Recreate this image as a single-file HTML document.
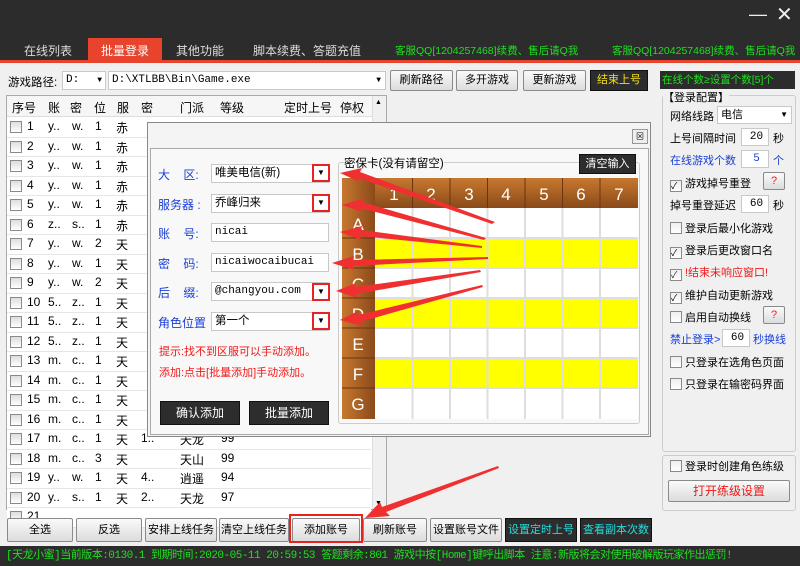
<!DOCTYPE html>
<html><head><meta charset="utf-8"><style>
*{margin:0;padding:0;box-sizing:border-box}
body{width:800px;height:566px;overflow:hidden;background:#f0f0f0;font-family:"Liberation Sans","Noto Sans CJK SC",sans-serif;font-size:12px;color:#000;position:relative}
.a{position:absolute}
.btn{position:absolute;background:linear-gradient(#fafafa,#dcdcdc);border:1px solid #8a8a8a;border-radius:2px;text-align:center;font-size:11px;line-height:22px;white-space:nowrap;overflow:hidden}
.dk{background:#2d2d2d;border:1px solid #111;border-radius:0}
.in{position:absolute;background:#fff;border:1px solid #c8c8c8;font-family:"Liberation Mono","Noto Sans CJK SC",monospace;font-size:11px;padding-left:3px}
.cb{display:inline-block;width:12px;height:12px;border:1px solid #8a8a8a;background:linear-gradient(#eee,#fff);vertical-align:-2px;margin-right:3px}
.row{position:absolute;left:7px;width:364px;height:19.5px;border-bottom:1px solid #e6e6e6;background:#fff}
.row span{position:absolute;top:1px;font-size:12px}
.lbl{position:absolute;color:#1a3fd6;font-size:12px}
.dd{position:absolute;width:18px;height:18px;border:2px solid #e8231f;background:#fff;font-size:8px;text-align:center;line-height:14px}
.rp{position:absolute;left:670px;font-size:11px;white-space:nowrap}
</style></head><body>
<div class="a" style="left:0;top:0;width:800px;height:62px;background:#2c2c2c"></div>
<div class="a" style="left:0;top:60px;width:800px;height:3px;background:#e8432c"></div>
<div class="a" style="left:88px;top:38px;width:74px;height:24px;background:#e8432c"></div>
<div class="a" style="left:24px;top:42px;color:#ddd;font-size:12px">在线列表</div>
<div class="a" style="left:101px;top:42px;color:#fff;font-size:12px">批量登录</div>
<div class="a" style="left:176px;top:42px;color:#ddd;font-size:12px">其他功能</div>
<div class="a" style="left:253px;top:42px;color:#ddd;font-size:12px">脚本续费、答题充值</div>
<div class="a" style="left:395px;top:43px;color:#1ee01e;font-size:10.5px;white-space:nowrap">客服QQ[1204257468]续费、售后请Q我</div>
<div class="a" style="left:612px;top:43px;color:#1ee01e;font-size:10.5px;white-space:nowrap">客服QQ[1204257468]续费、售后请Q我</div>
<div class="a" style="left:749px;top:4px;color:#eee;font-size:18px">—</div>
<div class="a" style="left:776px;top:2px;color:#eee;font-size:20px">✕</div>
<div class="a" style="left:8px;top:74px;font-size:11.5px">游戏路径:</div>
<div class="in" style="left:62px;top:71px;width:44px;height:19px;line-height:17px">D:<span style="position:absolute;right:3px;font-size:8px">▼</span></div>
<div class="in" style="left:108px;top:71px;width:278px;height:19px;line-height:17px">D:\XTLBB\Bin\Game.exe<span style="position:absolute;right:4px;font-size:8px">▼</span></div>
<div class="btn" style="left:390px;top:70px;width:63px;height:21px;line-height:19px">刷新路径</div>
<div class="btn" style="left:456px;top:70px;width:62px;height:21px;line-height:19px">多开游戏</div>
<div class="btn" style="left:523px;top:70px;width:63px;height:21px;line-height:19px">更新游戏</div>
<div class="btn dk" style="left:590px;top:70px;width:58px;height:21px;line-height:19px;color:#f0e020">结束上号</div>
<div class="a" style="left:660px;top:71px;width:135px;height:18px;background:#2c2c2c;color:#1ee01e;font-size:10.5px;line-height:18px;padding-left:2px;white-space:nowrap">在线个数≥设置个数[5]个</div>
<div class="a" style="left:6px;top:95px;width:381px;height:415px;background:#fff;border:1px solid #aaa"></div>
<div class="a" style="left:7px;top:96px;width:365px;height:21px;background:#f6f6f6;border-bottom:1px solid #ddd"></div>
<div class="a" style="left:12px;top:99px">序号</div><div class="a" style="left:48px;top:99px">账</div><div class="a" style="left:70px;top:99px">密</div><div class="a" style="left:94px;top:99px">位</div><div class="a" style="left:117px;top:99px">服</div><div class="a" style="left:141px;top:99px">密</div><div class="a" style="left:180px;top:99px">门派</div><div class="a" style="left:220px;top:99px">等级</div><div class="a" style="left:284px;top:99px">定时上号</div><div class="a" style="left:340px;top:99px">停权</div>
<div class="a" style="left:372px;top:96px;width:14px;height:413px;background:#f0f0f0;border-left:1px solid #ddd"></div>
<div class="a" style="left:375px;top:99px;font-size:7px">▲</div><div class="a" style="left:375px;top:500px;font-size:7px">▼</div>
<div id="rows"></div>
<div class="a" style="left:662px;top:95px;width:134px;height:357px;border:1px solid #ccc;border-radius:3px"></div>
<div class="a" style="left:663px;top:89px;background:#f0f0f0;font-size:11px">【登录配置】</div>
<div class="rp" style="top:108px">网络线路</div><div class="in" style="left:717px;top:106px;width:75px;height:18px;font-family:'Liberation Sans','Noto Sans CJK SC';font-size:11px;line-height:16px">电信<span style="position:absolute;right:3px;font-size:8px">▼</span></div>
<div class="rp" style="top:130px">上号间隔时间</div><div class="in" style="left:741px;top:128px;width:28px;height:18px;text-align:center;line-height:16px">20</div><div class="a" style="left:773px;top:130px;font-size:11px">秒</div>
<div class="rp" style="top:152px;color:#1a3fd6">在线游戏个数</div><div class="in" style="left:741px;top:150px;width:28px;height:18px;text-align:center;color:#1a3fd6;line-height:16px">5</div><div class="a" style="left:773px;top:152px;color:#1a3fd6;font-size:11px">个</div>
<div class="rp" style="top:175px"><span class="cb" style="font-size:9px;line-height:10px">✓</span>游戏掉号重登</div><div class="btn" style="left:763px;top:172px;width:22px;height:18px;line-height:16px;color:#e22">?</div>
<div class="rp" style="top:197px">掉号重登延迟</div><div class="in" style="left:741px;top:195px;width:28px;height:18px;text-align:center;line-height:16px">60</div><div class="a" style="left:773px;top:197px;font-size:11px">秒</div>
<div class="rp" style="top:220px"><span class="cb"></span>登录后最小化游戏</div>
<div class="rp" style="top:242px"><span class="cb" style="font-size:9px;line-height:10px">✓</span>登录后更改窗口名</div>
<div class="rp" style="top:264px;color:#f01818"><span class="cb" style="font-size:9px;line-height:10px;color:#222">✓</span>!结束未响应窗口!</div>
<div class="rp" style="top:287px"><span class="cb" style="font-size:9px;line-height:10px">✓</span>维护自动更新游戏</div>
<div class="rp" style="top:309px"><span class="cb"></span>启用自动换线</div><div class="btn" style="left:763px;top:306px;width:22px;height:18px;line-height:16px;color:#e22">?</div>
<div class="rp" style="top:331px;color:#1a3fd6">禁止登录&gt;</div><div class="in" style="left:722px;top:329px;width:28px;height:18px;text-align:center;line-height:16px">60</div><div class="a" style="left:753px;top:331px;color:#1a3fd6;font-size:11px">秒换线</div>
<div class="rp" style="top:354px"><span class="cb"></span>只登录在选角色页面</div>
<div class="rp" style="top:376px"><span class="cb"></span>只登录在输密码界面</div>
<div class="a" style="left:662px;top:455px;width:134px;height:56px;border:1px solid #ccc;border-radius:3px"></div>
<div class="rp" style="top:458px"><span class="cb"></span>登录时创建角色练级</div>
<div class="btn" style="left:668px;top:480px;width:122px;height:22px;line-height:20px;color:#f01818;font-size:12px">打开练级设置</div>
<div class="btn" style="left:7px;top:518px;width:66px;height:24px">全选</div>
<div class="btn" style="left:76px;top:518px;width:66px;height:24px">反选</div>
<div class="btn" style="left:145px;top:518px;width:72px;height:24px">安排上线任务</div>
<div class="btn" style="left:219px;top:518px;width:70px;height:24px">清空上线任务</div>
<div class="btn" style="left:292px;top:518px;width:68px;height:24px">添加账号</div>
<div class="a" style="left:289px;top:514px;width:74px;height:29px;border:2px solid #e8231f"></div>
<div class="btn" style="left:363px;top:518px;width:64px;height:24px">刷新账号</div>
<div class="btn" style="left:430px;top:518px;width:72px;height:24px">设置账号文件</div>
<div class="btn dk" style="left:505px;top:518px;width:72px;height:24px;color:#20e0e0">设置定时上号</div>
<div class="btn dk" style="left:580px;top:518px;width:72px;height:24px;color:#20e0e0">查看副本次数</div>
<div class="a" style="left:0;top:546px;width:800px;height:20px;background:#2c2c2c;color:#1ee01e;font-size:11px;line-height:20px;padding-left:6px;white-space:nowrap;font-family:'Liberation Mono','Noto Sans CJK SC',monospace;letter-spacing:-0.5px">[天龙小蜜]当前版本:0130.1 到期时间:2020-05-11 20:59:53 答题剩余:801 游戏中按[Home]键呼出脚本 注意:新版将会对使用破解版玩家作出惩罚!</div>
<div class="a" style="left:147px;top:122px;width:504px;height:315px;background:#f4f4f4;border:1px solid #888"></div>
<div class="a" style="left:150px;top:148px;width:499px;height:287px;border:1px solid #aaa;background:#f8f8f8"></div>
<div class="a" style="left:632px;top:129px;width:16px;height:15px;border:1px solid #999;font-size:8px;text-align:center;line-height:13px;background:#eee">⊠</div>
<div class="lbl" style="left:158px;top:166px">大&nbsp;&nbsp;&nbsp;&nbsp;区:</div>
<div class="lbl" style="left:158px;top:196px">服务器 :</div>
<div class="lbl" style="left:158px;top:225px">账&nbsp;&nbsp;&nbsp;&nbsp;号:</div>
<div class="lbl" style="left:158px;top:255px">密&nbsp;&nbsp;&nbsp;&nbsp;码:</div>
<div class="lbl" style="left:158px;top:284px">后&nbsp;&nbsp;&nbsp;&nbsp;缀:</div>
<div class="lbl" style="left:158px;top:314px">角色位置</div>
<div class="in" style="left:211px;top:164px;width:118px;height:19px;font-family:'Liberation Sans','Noto Sans CJK SC';font-size:11.5px;line-height:17px">唯美电信(新)</div>
<div class="in" style="left:211px;top:194px;width:118px;height:19px;font-family:'Liberation Sans','Noto Sans CJK SC';font-size:11.5px;line-height:17px">乔峰归来</div>
<div class="in" style="left:211px;top:223px;width:118px;height:19px;line-height:17px">nicai</div>
<div class="in" style="left:211px;top:253px;width:118px;height:19px;line-height:17px">nicaiwocaibucai</div>
<div class="in" style="left:211px;top:282px;width:118px;height:19px;line-height:17px">@changyou.com</div>
<div class="in" style="left:211px;top:312px;width:118px;height:19px;font-family:'Liberation Sans','Noto Sans CJK SC';font-size:11.5px;line-height:17px">第一个</div>
<div class="dd" style="left:312px;top:164px">▼</div><div class="dd" style="left:312px;top:194px">▼</div><div class="dd" style="left:312px;top:283px">▼</div><div class="dd" style="left:312px;top:312px">▼</div>
<div class="a" style="left:159px;top:343px;color:#f01818;font-size:11px">提示:找不到区服可以手动添加。</div>
<div class="a" style="left:159px;top:364px;color:#f01818;font-size:11px">添加:点击[批量添加]手动添加。</div>
<div class="btn dk" style="left:160px;top:401px;width:80px;height:24px;color:#fff;font-size:12px">确认添加</div>
<div class="btn dk" style="left:249px;top:401px;width:80px;height:24px;color:#fff;font-size:12px">批量添加</div>
<div class="a" style="left:338px;top:162px;width:302px;height:262px;border:1px solid #ccc;border-radius:3px"></div>
<div class="a" style="left:344px;top:155px;background:#f8f8f8;font-size:11.5px">密保卡(没有请留空)</div>
<div class="btn dk" style="left:579px;top:154px;width:57px;height:20px;line-height:18px;color:#fff">清空输入</div>
<svg class="a" style="left:342px;top:178px" width="296" height="241">
<defs><linearGradient id="g" x1="0" y1="0" x2="0" y2="1"><stop offset="0" stop-color="#c7782f"/><stop offset="1" stop-color="#8a4a1a"/></linearGradient>
<linearGradient id="g2" x1="0" y1="0" x2="1" y2="0"><stop offset="0" stop-color="#c7782f"/><stop offset="1" stop-color="#8a4a1a"/></linearGradient></defs>
<rect x="0" y="0" width="296" height="30" fill="url(#g)"/>
<rect x="0" y="0" width="33" height="241" fill="url(#g2)"/>
<rect x="33" y="30" width="263" height="211" fill="#fff"/>
<g fill="#ffff00"><rect x="33" y="60" width="263" height="30"/><rect x="33" y="120" width="263" height="30"/><rect x="33" y="180" width="263" height="30"/></g>
<g stroke="#dedede" stroke-width="2">
<line x1="70.5" y1="30" x2="70.5" y2="241"/><line x1="108" y1="30" x2="108" y2="241"/><line x1="145.5" y1="30" x2="145.5" y2="241"/><line x1="183" y1="30" x2="183" y2="241"/><line x1="220.5" y1="30" x2="220.5" y2="241"/><line x1="258" y1="30" x2="258" y2="241"/>
<line x1="33" y1="60" x2="296" y2="60"/><line x1="33" y1="90" x2="296" y2="90"/><line x1="33" y1="120" x2="296" y2="120"/><line x1="33" y1="150" x2="296" y2="150"/><line x1="33" y1="180" x2="296" y2="180"/><line x1="33" y1="210" x2="296" y2="210"/></g>
<g stroke="#6a3510" stroke-width="1"><line x1="70.5" y1="0" x2="70.5" y2="30"/><line x1="108" y1="0" x2="108" y2="30"/><line x1="145.5" y1="0" x2="145.5" y2="30"/><line x1="183" y1="0" x2="183" y2="30"/><line x1="220.5" y1="0" x2="220.5" y2="30"/><line x1="258" y1="0" x2="258" y2="30"/>
<line x1="0" y1="60" x2="33" y2="60"/><line x1="0" y1="90" x2="33" y2="90"/><line x1="0" y1="120" x2="33" y2="120"/><line x1="0" y1="150" x2="33" y2="150"/><line x1="0" y1="180" x2="33" y2="180"/><line x1="0" y1="210" x2="33" y2="210"/></g>
<g fill="#fff" font-family="Liberation Sans" font-size="17" text-anchor="middle">
<text x="52" y="22">1</text><text x="89" y="22">2</text><text x="127" y="22">3</text><text x="164" y="22">4</text><text x="202" y="22">5</text><text x="239" y="22">6</text><text x="277" y="22">7</text>
<text x="16" y="52">A</text><text x="16" y="82">B</text><text x="16" y="112">C</text><text x="16" y="142">D</text><text x="16" y="172">E</text><text x="16" y="202">F</text><text x="16" y="232">G</text></g>
</svg>
<svg class="a" style="left:0;top:0" width="800" height="566">
<g fill="#f03030">
<polygon points="340,173 362,168 360,172 495,222 492,224 358,178 360,182"/>
<polygon points="342,205 364,198 362,202 486,238 484,240 360,208 362,212"/>
<polygon points="340,232 362,226 361,230 482,246 482,248 360,236 361,240"/>
<polygon points="332,263 354,256 353,260 488,257 488,259 353,266 354,270"/>
<polygon points="336,291 356,283 355,287 480,270 481,272 356,294 358,298"/>
<polygon points="340,320 358,311 358,315 482,285 483,287 360,322 362,326"/>
<polygon points="365,518 380,502 382,507 498,466 499,468 386,512 390,516"/>
</g></svg>
<script>
var d=[["1","y..","w.","1","赤"],["2","y..","w.","1","赤"],["3","y..","w.","1","赤"],["4","y..","w.","1","赤"],["5","y..","w.","1","赤"],["6","z..","s..","1","赤"],["7","y..","w.","2","天"],["8","y..","w.","1","天"],["9","y..","w.","2","天"],["10","5..","z..","1","天"],["11","5..","z..","1","天"],["12","5..","z..","1","天"],["13","m.","c..","1","天"],["14","m.","c..","1","天"],["15","m.","c..","1","天"],["16","m.","c..","1","天"],["17","m.","c..","1","天","1..","天龙","99"],["18","m.","c..","3","天","","天山","99"],["19","y..","w.","1","天","4..","逍遥","94"],["20","y..","s..","1","天","2..","天龙","97"],["21","","","","","","",""]];
var h="",xs=[27,48,72,95,116,141,180,221];
d.forEach(function(r,i){h+='<div class="row" style="top:'+(118+i*19.5)+'px"><span style="left:3px;top:3px;width:12px;height:12px;border:1px solid #8a8a8a;background:linear-gradient(#ddd,#fff)"></span>';
for(var j=0;j<r.length;j++){h+='<span style="left:'+(xs[j]-7)+'px">'+r[j]+'</span>';}h+='</div>';});
document.getElementById("rows").outerHTML=h;
</script>
</body></html>
